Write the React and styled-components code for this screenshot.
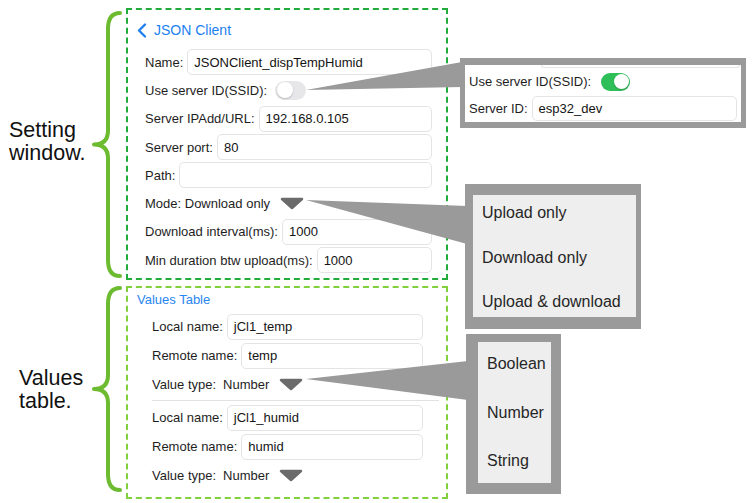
import React from 'react';
import styled, { createGlobalStyle } from 'styled-components';

const GlobalStyle = createGlobalStyle`
  html, body {
    margin: 0;
    padding: 0;
    background: #ffffff;
  }
  body {
    font-family: "Liberation Sans", Arial, sans-serif;
    color: #1e1e1e;
  }
`;

const Brace = ({ height, top, bottom }) => {
  const m = (top + (height - bottom)) / 2;
  const b = height - bottom;
  const d = `M30 ${top} Q18 ${top} 18 ${top + 16} L18 ${m - 14} Q18 ${m} 4 ${m} Q18 ${m} 18 ${m + 14} L18 ${b - 16} Q18 ${b} 30 ${b}`;
  return (
    <BraceSvg width="36" height={height} viewBox={`0 0 36 ${height}`}>
      <path d={d} fill="none" stroke="#6cbb30" strokeWidth="4" strokeLinecap="round" strokeLinejoin="round" />
    </BraceSvg>
  );
};

const Toggle = ({ on }) => (
  <Track $on={on}>
    <Knob $on={on} />
  </Track>
);

const DropArrow = () => (
  <Arrow width="24" height="13" viewBox="0 0 24 13">
    <polygon points="2,2 22,2 12,11" fill="#6b6b6b" stroke="#6b6b6b" strokeWidth="2.5" strokeLinejoin="round" />
  </Arrow>
);

const Field = ({ label, value }) => (
  <Row>
    <Label>{label}</Label>
    <InputBox>{value}</InputBox>
  </Row>
);

const settingFields = [
  { label: 'Server IPAdd/URL:', value: '192.168.0.105' },
  { label: 'Server port:', value: '80' },
  { label: 'Path:', value: '' },
];

const valueEntries = [
  { local: 'jCl1_temp', remote: 'temp', type: 'Number' },
  { local: 'jCl1_humid', remote: 'humid', type: 'Number' },
];

const App = () => {
  return (
    <>
      <GlobalStyle />
      <Canvas>
        <AnnotationColumn>
          <BraceGroup $height={272}>
            <Caption $indent={9}>
              <CaptionLine>Setting</CaptionLine>
              <CaptionLine>window.</CaptionLine>
            </Caption>
            <Brace height={272} top={5} bottom={4} />
          </BraceGroup>
          <BraceGroup $height={211}>
            <Caption $indent={19}>
              <CaptionLine>Values</CaptionLine>
              <CaptionLine>table.</CaptionLine>
            </Caption>
            <Brace height={211} top={2} bottom={7} />
          </BraceGroup>
        </AnnotationColumn>

        <PanelColumn>
          <Panel $color="#21ab3b">
            <Header>
              <svg width="10" height="15" viewBox="0 0 10 15">
                <path d="M8 1.5 L2 7.5 L8 13.5" fill="none" stroke="#1d7ff2" strokeWidth="2.3" strokeLinecap="round" strokeLinejoin="round" />
              </svg>
              <HeaderTitle>JSON Client</HeaderTitle>
            </Header>
            <Field label="Name:" value="JSONClient_dispTempHumid" />
            <Row>
              <Label>Use server ID(SSID):</Label>
              <Toggle on={false} />
            </Row>
            {settingFields.map((f) => (
              <Field key={f.label} label={f.label} value={f.value} />
            ))}
            <Row>
              <Label>Mode: Download only</Label>
              <DropArrow />
            </Row>
            <Field label="Download interval(ms):" value="1000" />
            <Field label="Min duration btw upload(ms):" value="1000" />
          </Panel>

          <Panel $color="#80d13c" $values>
            <SubHeader>Values Table</SubHeader>
            {valueEntries.map((v, i) => (
              <React.Fragment key={v.local}>
                {i > 0 && <Separator />}
                <ValueGroup>
                  <ValueRow>
                    <Label>Local name:</Label>
                    <InputBox>{v.local}</InputBox>
                  </ValueRow>
                  <ValueRow>
                    <Label>Remote name:</Label>
                    <InputBox>{v.remote}</InputBox>
                  </ValueRow>
                  <ValueRow>
                    <Label>Value type:</Label>
                    <TypeValue>{v.type}</TypeValue>
                    <DropArrow />
                  </ValueRow>
                </ValueGroup>
              </React.Fragment>
            ))}
          </Panel>
        </PanelColumn>

        <Wedges width="755" height="503" viewBox="0 0 755 503">
          <polygon points="306,90 462,62 462,87" fill="#9a9a9a" />
          <polygon points="306,200 467,206 467,244" fill="#9a9a9a" />
          <polygon points="306,379 468,361 468,400" fill="#9a9a9a" />
        </Wedges>

        <Callout $x={460} $y={58} $border="7px 5px 6px 5px" $bg="#ffffff">
          <SsidInner>
            <PartialInput $edge="top" />
            <SsidRow>
              <Label>Use server ID(SSID):</Label>
              <Toggle on />
            </SsidRow>
            <SsidRow>
              <Label>Server ID:</Label>
              <InputBox>esp32_dev</InputBox>
            </SsidRow>
            <PartialInput $edge="bottom" />
          </SsidInner>
        </Callout>

        <Callout $x={465} $y={184} $border="11px 5px 12px 8px" $bg="#eeeeee">
          <OptionList $w={163} $h={122} $item={36} $gap={8.5}>
            <Option>Upload only</Option>
            <Option>Download only</Option>
            <Option>Upload &amp; download</Option>
          </OptionList>
        </Callout>

        <Callout $x={466} $y={334} $border="8px 10px 11px 12px" $bg="#eeeeee">
          <OptionList $w={73} $h={141} $item={44} $gap={4.5}>
            <Option>Boolean</Option>
            <Option>Number</Option>
            <Option>String</Option>
          </OptionList>
        </Callout>
      </Canvas>
    </>
  );
};

export default App;

const Canvas = styled.div`
  position: relative;
  width: 755px;
  height: 503px;
  display: flex;
  overflow: hidden;
  background: #ffffff;
`;

const AnnotationColumn = styled.div`
  width: 126px;
  padding-top: 8px;
  display: flex;
  flex-direction: column;
  gap: 6px;
  box-sizing: border-box;
`;

const BraceGroup = styled.div`
  height: ${(p) => p.$height}px;
  display: flex;
  align-items: center;
  justify-content: space-between;
`;

const Caption = styled.div`
  padding-left: ${(p) => p.$indent}px;
  display: flex;
  flex-direction: column;
  margin-top: -4px;
`;

const CaptionLine = styled.span`
  display: block;
  font-size: 21.5px;
  line-height: 23px;
  height: 23px;
  color: #111;
`;

const BraceSvg = styled.svg`
  display: block;
  flex-shrink: 0;
`;

const PanelColumn = styled.div`
  padding-top: 8px;
  display: flex;
  flex-direction: column;
  gap: 6px;
`;

const Panel = styled.div`
  width: 322px;
  box-sizing: border-box;
  border: 2px dashed ${(p) => p.$color};
  padding: ${(p) => (p.$values ? '2px 23px 7px 24px' : '10px 14px 4px 17px')};
  display: flex;
  flex-direction: column;
`;

const Header = styled.div`
  height: 20px;
  margin: 0 0 8px -8px;
  display: flex;
  align-items: center;
  gap: 7px;
`;

const HeaderTitle = styled.span`
  color: #1d7ff2;
  font-size: 14px;
`;

const SubHeader = styled.div`
  height: 16px;
  line-height: 16px;
  margin: 2px 0 4px -15px;
  color: #2a86f0;
  font-size: 13px;
`;

const Row = styled.div`
  height: 28.3px;
  display: flex;
  align-items: center;
  gap: 4px;
`;

const Label = styled.span`
  font-size: 13px;
  color: #1e1e1e;
  white-space: nowrap;
`;

const InputBox = styled.div`
  flex: 1;
  height: 26px;
  box-sizing: border-box;
  border: 1px solid #e4e4e4;
  border-radius: 5px;
  background: #fff;
  padding-left: 6px;
  display: flex;
  align-items: center;
  font-size: 13px;
  color: #141414;
`;

const Track = styled.div`
  position: relative;
  width: ${(p) => (p.$on ? 29 : 31)}px;
  height: ${(p) => (p.$on ? 18 : 19)}px;
  margin-left: ${(p) => (p.$on ? 6 : 4)}px;
  border-radius: 10px;
  background: ${(p) => (p.$on ? '#2fbf59' : '#e7e7ea')};
  flex-shrink: 0;
`;

const Knob = styled.div`
  position: absolute;
  top: 1.5px;
  left: ${(p) => (p.$on ? 'auto' : '1.5px')};
  right: ${(p) => (p.$on ? '1.5px' : 'auto')};
  width: ${(p) => (p.$on ? 15 : 16)}px;
  height: ${(p) => (p.$on ? 15 : 16)}px;
  border-radius: 50%;
  background: #ffffff;
  box-shadow: 0 1px 2px rgba(0, 0, 0, 0.2);
`;

const Arrow = styled.svg`
  display: block;
  margin-left: 6px;
  flex-shrink: 0;
`;

const ValueGroup = styled.div`
  display: flex;
  flex-direction: column;
`;

const ValueRow = styled.div`
  height: 29px;
  display: flex;
  align-items: center;
  gap: 4px;
`;

const TypeValue = styled.span`
  font-size: 13px;
  color: #1e1e1e;
  margin-left: 3px;
`;

const Separator = styled.div`
  height: 1px;
  background: #e2e2e2;
  margin: 1px -16px 2px 0;
`;

const Wedges = styled.svg`
  position: absolute;
  left: 0;
  top: 0;
  pointer-events: none;
`;

const Callout = styled.div`
  position: absolute;
  left: ${(p) => p.$x}px;
  top: ${(p) => p.$y}px;
  border-style: solid;
  border-color: #9a9a9a;
  border-width: ${(p) => p.$border};
  background: ${(p) => p.$bg};
`;

const SsidInner = styled.div`
  width: 276px;
  height: 57px;
  padding-left: 4px;
  box-sizing: border-box;
  display: flex;
  flex-direction: column;
  overflow: hidden;
`;

const PartialInput = styled.div`
  height: 2px;
  flex-shrink: 0;
  margin-left: 72px;
  margin-right: 1px;
  border: 1px solid #e6e6e6;
  ${(p) => (p.$edge === 'top' ? 'border-top: none; border-radius: 0 0 5px 5px;' : 'border-bottom: none; border-radius: 5px 5px 0 0;')}
`;

const SsidRow = styled.div`
  height: 27px;
  flex-shrink: 0;
  display: flex;
  align-items: center;
  gap: 4px;
  padding-right: 4px;

  ${InputBox} {
    height: 25px;
  }
`;

const OptionList = styled.div`
  width: ${(p) => p.$w}px;
  height: ${(p) => p.$h}px;
  padding-left: 9px;
  box-sizing: border-box;
  display: flex;
  flex-direction: column;
  gap: ${(p) => p.$gap}px;

  & > * {
    height: ${(p) => p.$item}px;
    line-height: ${(p) => p.$item}px;
  }
`;

const Option = styled.div`
  font-size: 16px;
  color: #262626;
  white-space: nowrap;
`;
